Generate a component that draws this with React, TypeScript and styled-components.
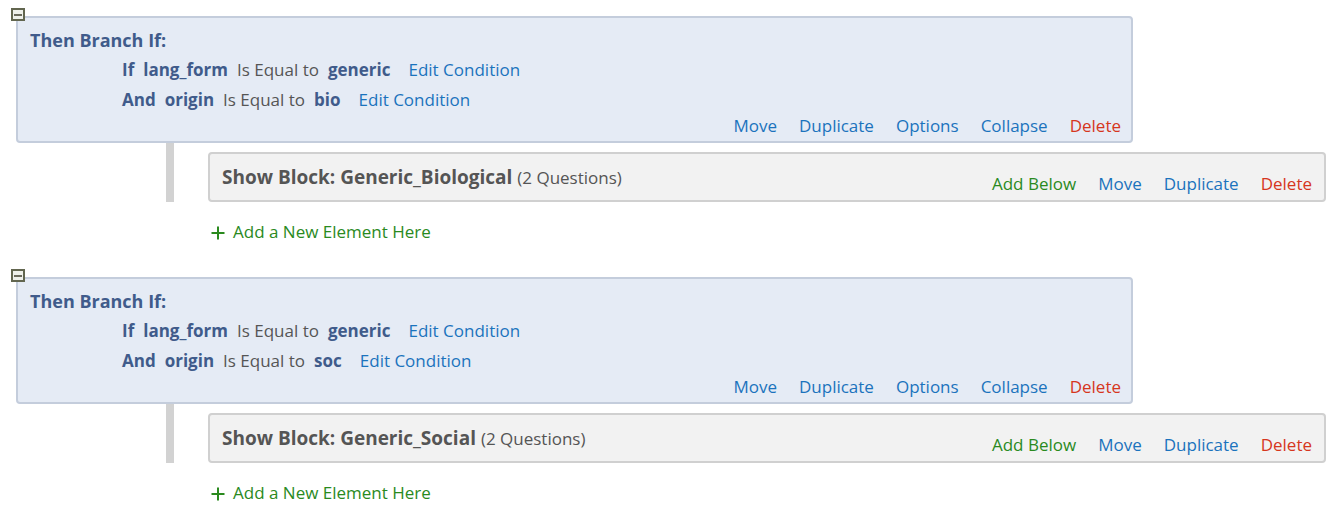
import React from "react";
import styled, { createGlobalStyle } from "styled-components";

const Global = createGlobalStyle`
  html, body { margin: 0; padding: 0; background: #ffffff; }
  body { font-family: "Open Sans", Lato, Arial, sans-serif; }
`;

const Page = styled.div`
  padding: 16px 0 0 16px;
  display: flex;
  flex-direction: column;
  gap: 36px;
`;

const Section = styled.div`
  position: relative;
  display: flex;
  flex-direction: column;
`;

const CollapseBox = styled.div`
  position: absolute;
  left: -5px;
  top: -8px;
  width: 14px;
  height: 13px;
  box-sizing: border-box;
  border: 2px solid #62664f;
  background: #eef0ea;
  display: flex;
  align-items: center;
  justify-content: center;
  z-index: 2;
  &::after {
    content: "";
    width: 8px;
    height: 2px;
    background: #6a6a5c;
  }
`;

const BranchPanel = styled.div`
  width: 1117px;
  height: 127px;
  box-sizing: border-box;
  background: #e5ebf5;
  border: 2px solid #c4cddc;
  border-radius: 4px;
  padding: 10px 10px 4px 12px;
  display: flex;
  flex-direction: column;
`;

const Title = styled.div`
  font-size: 18px;
  font-weight: 700;
  line-height: 24px;
  color: #405b8b;
`;

const Conditions = styled.div`
  margin: 2px 0 1px 92px;
  display: flex;
  flex-direction: column;
`;

const CondRow = styled.div`
  display: flex;
  align-items: center;
  gap: 9px;
  height: 30px;
  font-size: 17px;
`;

const Key = styled.span`
  font-weight: 700;
  color: #405b8b;
`;

const Op = styled.span`
  color: #555555;
`;

const Link = styled.span<{ $tone?: "blue" | "green" | "red"; $gap?: number }>`
  font-size: 17px;
  color: ${(p) =>
    p.$tone === "green" ? "#2a8a1e" : p.$tone === "red" ? "#d6361d" : "#1b73bd"};
  margin-left: ${(p) => p.$gap ?? 0}px;
  cursor: pointer;
`;

const Actions = styled.div<{ $top?: number }>`
  display: flex;
  justify-content: flex-end;
  align-items: center;
  gap: 22px;
  height: 22px;
  line-height: 22px;
  margin-top: ${(p) => p.$top ?? 0}px;
`;

const ChildArea = styled.div`
  margin-left: 150px;
  border-left: 8px solid #d2d2d2;
  padding: 9px 0 0 34px;
  display: flex;
`;

const ShowBlock = styled.div`
  width: 1118px;
  height: 50px;
  box-sizing: border-box;
  background: #f2f2f2;
  border: 2px solid #d0d0d0;
  border-radius: 4px;
  padding: 0 12px 0 12px;
  display: flex;
  justify-content: space-between;
  align-items: flex-start;
`;

const BlockTitle = styled.div`
  margin-top: 12px;
  line-height: 22px;
  font-size: 19px;
  color: #555555;
  b { font-weight: 700; }
  span { font-size: 17px; }
`;

const AddRow = styled.div`
  margin: 19px 0 0 194px;
  display: flex;
  align-items: center;
  gap: 7px;
  height: 20px;
  color: #2a8a1e;
  font-size: 17px;
  cursor: pointer;
`;

const Plus = styled.svg`
  width: 16px;
  height: 16px;
  margin-top: 4px;
`;

type Branch = { a: string; b: string; block: string };

const branches: Branch[] = [
  { a: "generic", b: "bio", block: "Generic_Biological" },
  { a: "generic", b: "soc", block: "Generic_Social" },
];

export default function App() {
  return (
    <>
      <Global />
      <Page>
        {branches.map((br, i) => (
          <Section key={i}>
            <CollapseBox />
            <BranchPanel>
              <Title>Then Branch If:</Title>
              <Conditions>
                <CondRow>
                  <Key>If</Key>
                  <Key>lang_form</Key>
                  <Op>Is Equal to</Op>
                  <Key>{br.a}</Key>
                  <Link $gap={9}>Edit Condition</Link>
                </CondRow>
                <CondRow>
                  <Key>And</Key>
                  <Key>origin</Key>
                  <Op>Is Equal to</Op>
                  <Key>{br.b}</Key>
                  <Link $gap={9}>Edit Condition</Link>
                </CondRow>
              </Conditions>
              <Actions>
                <Link>Move</Link>
                <Link>Duplicate</Link>
                <Link>Options</Link>
                <Link>Collapse</Link>
                <Link $tone="red">Delete</Link>
              </Actions>
            </BranchPanel>
            <ChildArea>
              <ShowBlock>
                <BlockTitle>
                  <b>Show Block: {br.block}</b> <span>(2 Questions)</span>
                </BlockTitle>
                <Actions $top={19}>
                  <Link $tone="green">Add Below</Link>
                  <Link>Move</Link>
                  <Link>Duplicate</Link>
                  <Link $tone="red">Delete</Link>
                </Actions>
              </ShowBlock>
            </ChildArea>
            <AddRow>
              <Plus viewBox="0 0 16 16">
                <path d="M8 1.5v13M1.5 8h13" stroke="#2a8a1e" strokeWidth="2" />
              </Plus>
              Add a New Element Here
            </AddRow>
          </Section>
        ))}
      </Page>
    </>
  );
}
